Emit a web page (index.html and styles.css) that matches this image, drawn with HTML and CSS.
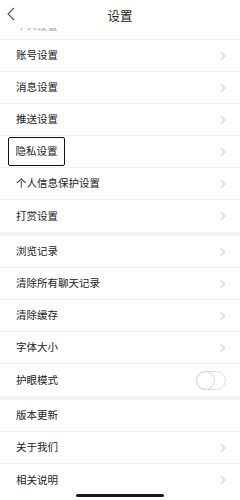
FILE: index.html
```html
<!DOCTYPE html>
<html lang="zh">
<head>
<meta charset="utf-8">
<link rel="stylesheet" href="styles.css">
</head>
<body>
<div class="screen">
  <div class="list">
    <div class="group">
      <div class="row partial"><span class="label">个人设置</span></div>
      <div class="row"><span class="label">账号设置</span><span class="chev"></span></div>
      <div class="row"><span class="label">消息设置</span><span class="chev"></span></div>
      <div class="row"><span class="label">推送设置</span><span class="chev"></span></div>
      <div class="row"><span class="label boxed">隐私设置</span><span class="chev"></span></div>
      <div class="row"><span class="label">个人信息保护设置</span><span class="chev"></span></div>
      <div class="row last"><span class="label">打赏设置</span><span class="chev"></span></div>
    </div>
    <div class="group">
      <div class="row"><span class="label">浏览记录</span><span class="chev"></span></div>
      <div class="row"><span class="label">清除所有聊天记录</span><span class="chev"></span></div>
      <div class="row"><span class="label">清除缓存</span><span class="chev"></span></div>
      <div class="row"><span class="label">字体大小</span><span class="chev"></span></div>
      <div class="row last"><span class="label">护眼模式</span><span class="switch"><span class="knob"></span></span></div>
    </div>
    <div class="group">
      <div class="row"><span class="label">版本更新</span></div>
      <div class="row"><span class="label">关于我们</span><span class="chev"></span></div>
      <div class="row last"><span class="label">相关说明</span><span class="chev"></span></div>
    </div>
  </div>
  <header class="nav">
    <svg class="back" width="10" height="14" viewBox="0 0 10 14"><polyline points="8,1 2,7 8,13" fill="none" stroke="#555" stroke-width="1.1"/></svg>
    <span class="title">设置</span>
  </header>
  <div class="home-bar"></div>
</div>
</body>
</html>
```
FILE: styles.css
```css
* { box-sizing: border-box; }
html, body { margin: 0; padding: 0; background: #fff; }
body {
  font-family: "Noto Sans CJK SC", "Noto Sans", sans-serif;
  color: #222;
}
.screen {
  position: relative;
  width: 240px;
  height: 500px;
  overflow: hidden;
  background: #fff;
}
.nav {
  position: absolute;
  top: 0; left: 0; right: 0;
  height: 28px;
  background: #fff;
  display: flex;
  align-items: center;
  justify-content: center;
}
.back {
  position: absolute;
  left: 6px;
  top: 7px;
}
.title {
  font-size: 12.5px;
  color: #222;
  margin-top: 2px;
}
.list {
  padding-top: 8px;
  display: flex;
  flex-direction: column;
}
.group {
  display: flex;
  flex-direction: column;
  border-bottom: 4px solid #f4f4f4;
}
.group:last-child { border-bottom: none; }
.row {
  height: 32px;
  display: flex;
  align-items: center;
  justify-content: space-between;
  padding: 0 16px;
  border-bottom: 1px solid #f0f0f0;
}
.row.last { border-bottom: none; }
.row.partial { padding-top: 6px; }
.row.partial .label { color: #aaa; }
.label {
  font-size: 10.5px;
  line-height: 1;
  color: #222;
}
.boxed {
  display: inline-flex;
  align-items: center;
  height: 29px;
  margin-left: -8px;
  padding: 0 6.5px;
  border: 1.5px solid #111;
  border-radius: 2px;
}
.chev {
  width: 6px;
  height: 6px;
  border-top: 1px solid #cfcfcf;
  border-right: 1px solid #cfcfcf;
  transform: rotate(45deg);
  margin-right: 0;
}
.switch {
  width: 30px;
  height: 19px;
  border: 1px solid #dcdcdc;
  border-radius: 10px;
  margin-right: -2px;
  display: flex;
  align-items: center;
}
.knob {
  width: 19px;
  height: 19px;
  margin-left: -1px;
  border: 1px solid #d4d4d4;
  border-radius: 50%;
  background: #fff;
}
.home-bar {
  position: absolute;
  left: 76px;
  bottom: 3px;
  width: 88px;
  height: 3px;
  border-radius: 2px;
  background: #1a1a1a;
}
```
